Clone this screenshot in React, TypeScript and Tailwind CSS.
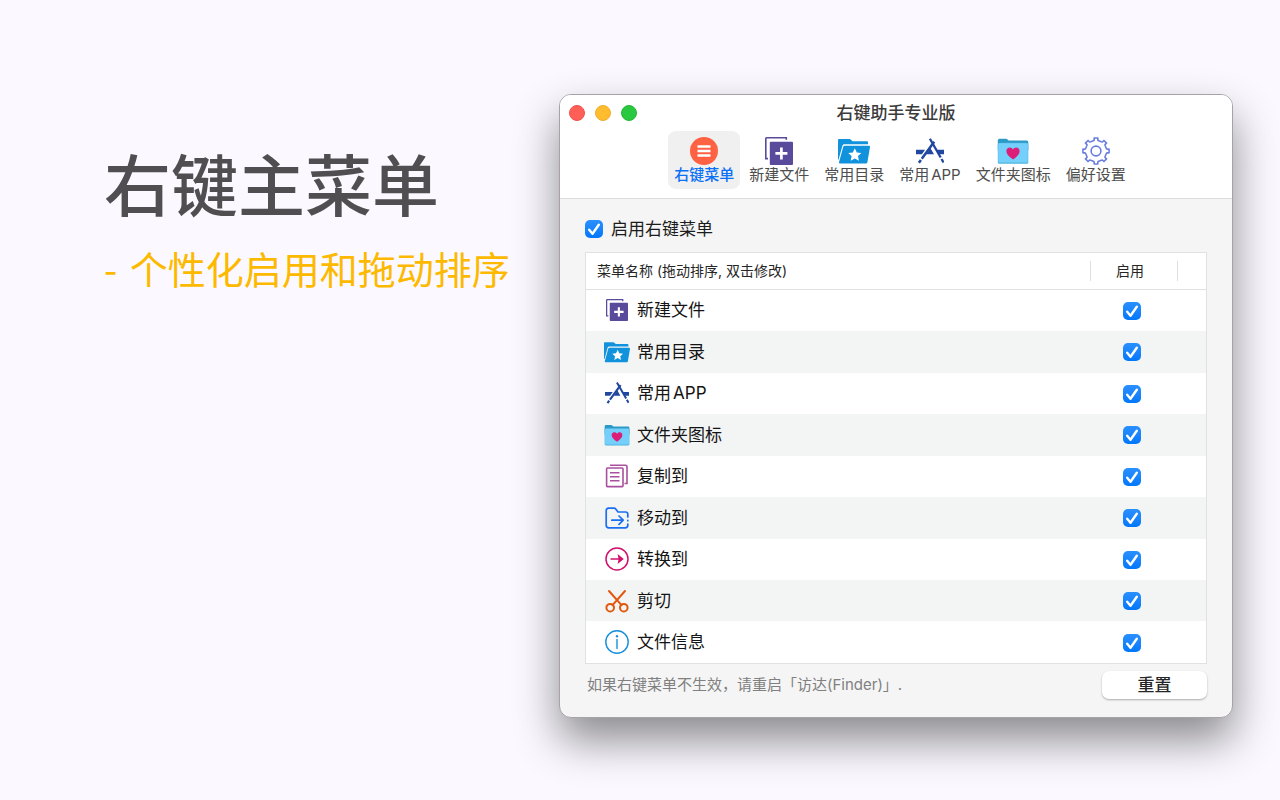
import { useState } from 'react'
import type { ReactNode } from 'react'
import clsx from 'clsx'

function MenuIcon({ className }: { className?: string }) {
  return (
    <svg viewBox="0 0 28 28" className={className} aria-hidden="true">
      <circle cx="14" cy="14" r="14" fill="#ff6243" />
      <path d="M7.5 9.4h13M7.5 14h13M7.5 18.6h13" stroke="#fff" strokeWidth="2.5" fill="none" />
    </svg>
  )
}

function NewFileIcon({ className }: { className?: string }) {
  return (
    <svg viewBox="0 0 28 28" className={className} aria-hidden="true">
      <path d="M21.3 2.8V.8H1.6Q.8.8.8 1.6v20h2.2" stroke="#5a4a9c" strokeWidth="1.6" fill="none" />
      <rect x="4.8" y="4.8" width="23.2" height="23.2" rx="1" fill="#5a4a9c" />
      <path d="M16.4 10.4v12M10.4 16.4h12" stroke="#fff" strokeWidth="2.7" fill="none" />
    </svg>
  )
}

function FolderStarIcon({ className }: { className?: string }) {
  return (
    <svg viewBox="0 0 32 28" className={className} aria-hidden="true">
      <path d="M0 3q0-1 1-1h10.5q.7 0 1.2.5l1.8 1.7H29q1 0 1 1v2H6.2q-1.3 0-1.7 1.2L.6 22.500H0z" fill="#1192dc" />
      <path d="M6.900 8.800H31q1.200 0 1 1.200l-2.600 15.300q-.2 1.200-1.500 1.200H2q-1.300 0-1-1.200l4.200-15.200Q5.600 8.800 6.900 8.800z" fill="#1192dc" />
      <path d="M16.800 11.200l2 4.200 4.600.6-3.400 3.100.9 4.600-4.100-2.300-4.100 2.300.9-4.600-3.400-3.100 4.600-.6z" fill="#fff" />
    </svg>
  )
}

function AppIcon({ className }: { className?: string }) {
  return (
    <svg viewBox="0 0 28 28" className={className} aria-hidden="true">
      <path d="M0 12.700h9l-3.100 4.600H0zM20.300 12.700H28v4.600h-5zM11.500 15.600l3-4.400 3.500 6.100h-7.700z" fill="#2147a0" />
      <path d="M13.900 1.700l10.800 18.800M25.500 22l2 3.500" stroke="#2147a0" strokeWidth="2.300" fill="none" />
      <path d="M18.200 4.800L5.800 21.700M4.900 22.900l-2 2.800" stroke="#2147a0" strokeWidth="2.500" fill="none" />
    </svg>
  )
}

function FolderHeartIcon({ className }: { className?: string }) {
  return (
    <svg viewBox="0 0 32 28" className={className} aria-hidden="true">
      <path d="M.8 3.600Q.8 1.800 2.600 1.800h6.200q1 0 1.700.7l1.100 1h17.900q1.800 0 1.800 1.800v8H.8z" fill="#2c9ac6" />
      <rect x=".8" y="5.800" width="30.500" height="21" rx="1.600" fill="#4fb4e0" />
      <rect x="1.300" y="6.300" width="29.500" height="19.300" rx="1.200" fill="#74cffb" />
      <path
        d="M16 22.400c-3.600-2.500-6.600-5-6.600-8.300 0-2 1.500-3.500 3.300-3.500 1.500 0 2.700.8 3.300 2 .6-1.200 1.800-2 3.300-2 1.800 0 3.300 1.500 3.300 3.500 0 3.300-3 5.800-6.600 8.300z"
        fill="#dc1e78"
      />
    </svg>
  )
}

// one tooth, as [angle offset in degrees, radius]
const TOOTH = [
  [-15, 10.6],
  [-9.5, 11],
  [-8, 13.2],
  [8, 13.2],
  [9.5, 11],
  [15, 10.6],
]

const GEAR_POINTS = Array.from({ length: 8 }, (_, i) =>
  TOOTH.map(([offset, r]) => {
    const a = ((i * 45 + offset) * Math.PI) / 180
    return `${(14 + r * Math.sin(a)).toFixed(2)},${(14 - r * Math.cos(a)).toFixed(2)}`
  }).join(' '),
).join(' ')

function GearIcon({ className }: { className?: string }) {
  return (
    <svg viewBox="0 0 28 28" className={className} fill="none" stroke="#6b7ee0" strokeWidth="1.600" aria-hidden="true">
      <polygon points={GEAR_POINTS} strokeLinejoin="round" />
      <circle cx="14" cy="14" r="4.900" />
    </svg>
  )
}

function CopyIcon({ className }: { className?: string }) {
  return (
    <svg viewBox="0 0 24 24" className={className} fill="none" stroke="#a9509f" strokeWidth="1.600" aria-hidden="true">
      <path d="M5 1.200h15.500q1.500 0 1.500 1.500v16.800h-2.500" />
      <rect x="1.600" y="4" width="16.400" height="18.600" rx=".8" />
      <path d="M5 8.800h9.500M5 12.800h9.500M5 16.800h9.500" />
    </svg>
  )
}

function MoveIcon({ className }: { className?: string }) {
  return (
    <svg
      viewBox="0 0 24 24"
      className={className}
      fill="none"
      stroke="#1b6df2"
      strokeWidth="1.700"
      strokeLinecap="round"
      strokeLinejoin="round"
      aria-hidden="true"
    >
      <path d="M22.800 11V8.200q0-2.200-2.200-2.200H13l-2.300-3q-.6-.8-1.600-.8H3.600Q1.200 2.200 1.200 4.600v14.600q0 2.600 2.600 2.600h16.400q2.600 0 2.600-2.600V18M22.800 14.400v.3" />
      <path d="M6.800 14.200h11M14 10l4.200 4.200L14 18.400" />
    </svg>
  )
}

function ConvertIcon({ className }: { className?: string }) {
  return (
    <svg viewBox="0 0 24 24" className={className} aria-hidden="true">
      <circle cx="12" cy="12" r="11" fill="none" stroke="#d0116c" strokeWidth="1.500" />
      <path d="M5.500 12h9" stroke="#d0116c" strokeWidth="1.700" fill="none" />
      <path d="M12.600 7l6.200 5-6.200 5 1-5z" fill="#d0116c" />
    </svg>
  )
}

function CutIcon({ className }: { className?: string }) {
  return (
    <svg viewBox="0 0 24 24" className={className} fill="none" stroke="#e2570c" strokeWidth="2" strokeLinecap="round" aria-hidden="true">
      <path d="M4 2l12.500 14.200M20 2L7.500 16.200" />
      <circle cx="5.200" cy="18.700" r="3.800" />
      <circle cx="18.800" cy="18.700" r="3.800" />
    </svg>
  )
}

function InfoIcon({ className }: { className?: string }) {
  return (
    <svg viewBox="0 0 24 24" className={className} fill="none" stroke="#1690dc" strokeWidth="1.400" aria-hidden="true">
      <circle cx="12" cy="12" r="11.200" />
      <path d="M12 9.500v9" strokeLinecap="round" />
      <circle cx="12" cy="6.300" r="1.200" fill="#1690dc" stroke="none" />
    </svg>
  )
}

interface Tab {
  label: string
  icon: ReactNode
}

const TABS: Tab[] = [
  { label: '右键菜单', icon: <MenuIcon className="size-7" /> },
  { label: '新建文件', icon: <NewFileIcon className="size-7" /> },
  { label: '常用目录', icon: <FolderStarIcon className="h-7 w-8" /> },
  { label: '常用APP', icon: <AppIcon className="size-7" /> },
  { label: '文件夹图标', icon: <FolderHeartIcon className="h-7 w-8" /> },
  { label: '偏好设置', icon: <GearIcon className="size-7" /> },
]

interface MenuRow {
  name: string
  icon: ReactNode
}

const ROWS: MenuRow[] = [
  { name: '新建文件', icon: <NewFileIcon className="size-[22px]" /> },
  { name: '常用目录', icon: <FolderStarIcon className="h-6 w-[26px]" /> },
  { name: '常用APP', icon: <AppIcon className="size-6" /> },
  { name: '文件夹图标', icon: <FolderHeartIcon className="h-6 w-[26px]" /> },
  { name: '复制到', icon: <CopyIcon className="size-6" /> },
  { name: '移动到', icon: <MoveIcon className="size-6" /> },
  { name: '转换到', icon: <ConvertIcon className="size-6" /> },
  { name: '剪切', icon: <CutIcon className="size-6" /> },
  { name: '文件信息', icon: <InfoIcon className="size-6" /> },
]

interface CheckboxProps {
  id?: string
  label?: string
  checked: boolean
  onChange: (checked: boolean) => void
}

function Checkbox({ id, label, checked, onChange }: CheckboxProps) {
  return (
    <span className="inline-grid size-[18px] align-middle">
      <input
        id={id}
        type="checkbox"
        aria-label={label}
        checked={checked}
        onChange={(e) => onChange(e.target.checked)}
        className="col-start-1 row-start-1 size-[18px] appearance-none rounded-[5px] border border-gray-300 bg-white checked:border-0 checked:bg-linear-to-b checked:from-[#2a90ff] checked:to-[#0077fa]"
      />
      {checked ? (
        <svg viewBox="0 0 18 18" className="pointer-events-none col-start-1 row-start-1 size-[18px]" aria-hidden="true">
          <path
            d="M4.200 9.800l3.300 4L13.800 4.800"
            fill="none"
            stroke="#fff"
            strokeWidth="2.400"
            strokeLinecap="round"
            strokeLinejoin="round"
          />
        </svg>
      ) : null}
    </span>
  )
}

export default function App() {
  const [tab, setTab] = useState(0)
  const [enabled, setEnabled] = useState(true)
  const [checks, setChecks] = useState<boolean[]>(() => ROWS.map(() => true))

  function toggle(index: number, value: boolean) {
    setChecks((prev) => prev.map((c, i) => (i === index ? value : c)))
  }

  function reset() {
    setEnabled(true)
    setChecks(ROWS.map(() => true))
  }

  return (
    <main className="flex min-h-screen items-start justify-between gap-8 bg-[#fbf9ff] pt-[94px] pr-[47px] pb-20 pl-[104px] [font-family:Inter,'Noto_Sans_CJK_SC',sans-serif] [text-autospace:normal]">
      <section className="shrink-0 pt-11 [font-family:'Noto_Sans_CJK_SC',sans-serif] whitespace-nowrap">
        <h1 className="text-[67px] leading-[88px] font-medium text-[#504e50]">右键主菜单</h1>
        <p className="mt-4 text-[38px] leading-[52px] text-[#fdb900]">
          <span className="mr-1">-</span> 个性化启用和拖动排序
        </p>
      </section>

      <section className="w-full max-w-[674px] overflow-hidden rounded-xl border border-[#a5a3a8] bg-[#f5f5f5] shadow-[0_22px_44px_rgba(0,0,0,0.45)]">
        <header className="border-b border-[#dcdedd] bg-white pb-[9px]">
          <div className="grid grid-cols-[1fr_auto_1fr] items-center px-[9px] pt-1">
            <div className="flex gap-[10px]">
              <button type="button" aria-label="关闭" className="size-4 rounded-full border border-[#f0524d] bg-[#ff5f57]" />
              <button type="button" aria-label="最小化" className="size-4 rounded-full border border-[#f0ae2b] bg-[#febc2e]" />
              <button type="button" aria-label="缩放" className="size-4 rounded-full border border-[#24b739] bg-[#28c840]" />
            </div>
            <h2 className="text-[17px] leading-7 font-medium text-[#3b3b3b]">右键助手专业版</h2>
          </div>
          <nav className="mt-1 flex justify-center gap-[3px] pl-2">
            {TABS.map((t, i) => (
              <button
                key={t.label}
                type="button"
                onClick={() => setTab(i)}
                className={clsx(
                  'flex h-[58px] flex-col items-center rounded-lg px-[6px] pt-[6px] text-[15px] leading-5',
                  tab === i ? 'bg-[#f0f0f0] font-medium text-[#0a70f5]' : 'text-[#4d4d4d]',
                )}
              >
                {t.icon}
                {t.label}
              </button>
            ))}
          </nav>
        </header>

        <div className="px-[25px] pt-4 pb-[18px]">
          <label htmlFor="enable-menu" className="flex items-center gap-2 text-[17px] leading-7 text-[#1c1c1c]">
            <Checkbox id="enable-menu" checked={enabled} onChange={setEnabled} />
            启用右键菜单
          </label>

          <div className="mt-[9px] border border-[#e0e2e1] bg-white">
            <table className="h-[410px] w-full table-fixed border-collapse text-left">
              <thead>
                <tr className="h-9 border-b border-[#e0e2e1] text-[14px] leading-5 text-[#262626]">
                  <th className="py-[7px] pl-[11px] font-normal">
                    <div className="border-r border-[#dfdfdf]">菜单名称 (拖动排序, 双击修改)</div>
                  </th>
                  <th className="w-[87px] py-[7px] font-normal">
                    <div className="border-r border-[#dfdfdf] pr-2 text-center">启用</div>
                  </th>
                  <th className="w-7" aria-label="更多" />
                </tr>
              </thead>
              <tbody>
                {ROWS.map((row, i) => (
                  <tr key={row.name} className="even:bg-[#f3f5f4]">
                    <td className="pl-[18px]">
                      <div className="flex items-center gap-[7px] text-[17px] leading-6 text-[#141414]">
                        <span className="flex w-[26px] justify-center">{row.icon}</span>
                        {row.name}
                      </div>
                    </td>
                    <td className="pr-[6px] text-center leading-none">
                      <Checkbox label={row.name} checked={checks[i]} onChange={(v) => toggle(i, v)} />
                    </td>
                    <td />
                  </tr>
                ))}
              </tbody>
            </table>
          </div>

          <div className="mt-[7px] flex items-start justify-between">
            <p className="pl-[2px] text-[15px] leading-7 text-[#808080]">如果右键菜单不生效，请重启「访达(Finder)」.</p>
            <button
              type="button"
              onClick={reset}
              className="h-7 w-[105px] rounded-[7px] bg-white text-[17px] leading-7 font-medium text-[#262626] shadow-[0_1px_2px_rgba(0,0,0,0.3)]"
            >
              重置
            </button>
          </div>
        </div>
      </section>
    </main>
  )
}
